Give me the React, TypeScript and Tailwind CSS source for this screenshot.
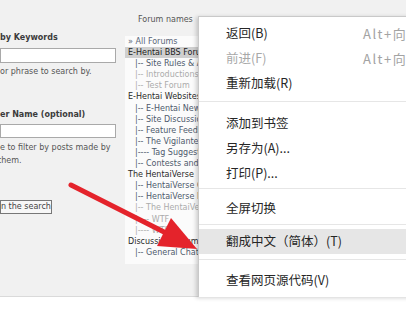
import React from "react";

type Row = { t: string; k: "all" | "sel" | "cat" | "sub" | "dim" };

const forums: Row[] = [
  { t: "» All Forums", k: "all" },
  { t: "E-Hentai BBS Forums", k: "sel" },
  { t: "|-- Site Rules & Announcements", k: "sub" },
  { t: "|-- Introductions", k: "dim" },
  { t: "|-- Test Forum", k: "dim" },
  { t: "E-Hentai Websites", k: "cat" },
  { t: "|-- E-Hentai News", k: "sub" },
  { t: "|-- Site Discussion", k: "sub" },
  { t: "|-- Feature Feedback", k: "sub" },
  { t: "|-- The Vigilante", k: "sub" },
  { t: "|---- Tag Suggestions", k: "sub" },
  { t: "|-- Contests and Events", k: "sub" },
  { t: "The HentaiVerse", k: "cat" },
  { t: "|-- HentaiVerse Chat", k: "sub" },
  { t: "|-- HentaiVerse Marketplace", k: "sub" },
  { t: "|-- The HentaiVerse Archives", k: "dim" },
  { t: "|---- WTF", k: "dim" },
  { t: "|---- WTS", k: "dim" },
  { t: "Discussion Forums", k: "cat" },
  { t: "|-- General Chat", k: "sub" },
];

const rowClass: Record<Row["k"], string> = {
  all: "pl-[3px] text-[#5a6678]",
  sel: "pl-[3px] bg-[#cfcfcf] text-[#222]",
  cat: "pl-[3px] text-[#2a2a2a]",
  sub: "pl-[10px] text-[#4e5a6c]",
  dim: "pl-[10px] text-[#ababab]",
};

function MenuItem({
  label,
  shortcut,
  disabled,
  active,
}: {
  label: string;
  shortcut?: string;
  disabled?: boolean;
  active?: boolean;
}) {
  return (
    <div
      className={`flex items-center h-[25px] pl-[27px] whitespace-nowrap ${
        active ? "bg-[#e6e6e6]" : ""
      }`}
    >
      <span
        className={`w-[137px] shrink-0 ${disabled ? "text-[#a8a8a8]" : "text-[#262626]"}`}
      >
        {label}
      </span>
      {shortcut && <span className="text-[#a3a3a3] text-[13px] tracking-[1.5px]">{shortcut}</span>}
    </div>
  );
}

function Sep({ top, bottom }: { top: number; bottom: number }) {
  return (
    <div style={{ paddingTop: top, paddingBottom: bottom }}>
      <div className="h-px bg-[#e6e6e6]" />
    </div>
  );
}

export default function App() {
  return (
    <div className="relative w-[406px] h-[320px] overflow-hidden bg-white">
      {/* page behind the menu */}
      <div className="flex h-[297px] bg-[#f1f1f1] border-b border-[#dadada] font-['DejaVu_Sans',sans-serif] text-[8px]">
        {/* search fields */}
        <div className="w-[125px] shrink-0 flex flex-col pt-[33px]">
          <div className="leading-[10px] font-bold text-[#3c3c3c] whitespace-nowrap">by Keywords</div>
          <div className="mt-[5px] w-[116px] h-[15px] bg-white border border-[#a9a9a9]" />
          <div className="mt-[2px] leading-[13px] text-[#555] whitespace-nowrap">or phrase to search by.</div>
          <div className="mt-[32px] leading-[10px] font-bold text-[#3c3c3c] whitespace-nowrap">er Name (optional)</div>
          <div className="mt-[4px] w-[116px] h-[14px] bg-white border border-[#a9a9a9]" />
          <div className="mt-[3px] leading-[13px] text-[#555] whitespace-nowrap">
            <div>e to filter by posts made by</div>
            <div className="-ml-[2px]">them.</div>
          </div>
          <div className="mt-[33px] w-[52px] h-[14px] bg-[#f7f7f7] border border-[#777] leading-[12px] text-[#444] whitespace-nowrap overflow-hidden">
            n the search
          </div>
        </div>

        {/* forum list */}
        <div className="w-[110px] shrink-0 flex flex-col">
          <div className="pt-[15px] pl-[13px] leading-[10px] text-[#555] whitespace-nowrap">Forum names</div>
          <div className="mt-[11px] w-[100px] bg-[#fbfbfb] pb-[6px] leading-[11.1px]">
            {forums.map((r, i) => (
              <div key={i} className={`whitespace-nowrap overflow-hidden ${rowClass[r.k]}`}>
                {r.t}
              </div>
            ))}
          </div>
        </div>
      </div>

      {/* context menu */}
      <div className="absolute left-[198px] top-[16px] w-[240px] h-[281px] overflow-hidden bg-white border-l border-t border-[#c9c9c9] shadow-[-2px_1px_4px_rgba(0,0,0,0.18)] pt-[4px] font-['Noto_Sans_CJK_SC',sans-serif] text-[12.5px]">
        <MenuItem label="返回(B)" shortcut="Alt+向左方向键" />
        <MenuItem label="前进(F)" shortcut="Alt+向右方向键" disabled />
        <MenuItem label="重新加载(R)" />
        <Sep top={5} bottom={9} />
        <MenuItem label="添加到书签" />
        <MenuItem label="另存为(A)..." />
        <MenuItem label="打印(P)..." />
        <Sep top={2} bottom={7} />
        <MenuItem label="全屏切换" />
        <Sep top={3} bottom={4} />
        <MenuItem label="翻成中文（简体）(T)" active />
        <Sep top={5} bottom={8} />
        <MenuItem label="查看网页源代码(V)" />
        <MenuItem label="审查元素(N)" />
      </div>

      {/* red annotation arrow */}
      <svg className="absolute inset-0 pointer-events-none" width="406" height="320" viewBox="0 0 406 320">
        <line x1="71" y1="185" x2="166" y2="233" stroke="#e4232b" strokeWidth="5" strokeLinecap="round" />
        <polygon points="197,249 157,246 171,218" fill="#e4232b" />
      </svg>
    </div>
  );
}
